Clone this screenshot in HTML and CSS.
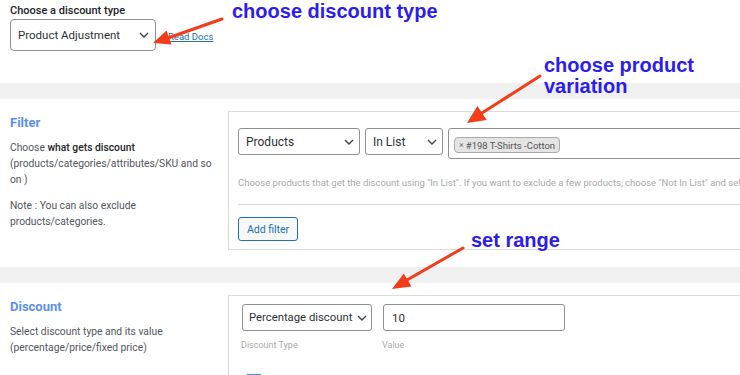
FILE: index.html
```html
<!DOCTYPE html>
<html>
<head>
<meta charset="utf-8">
<link rel="stylesheet" href="styles.css">
</head>
<body>
<div class="page">
  <div class="top">
    <div class="top-label">Choose a discount type</div>
    <div class="top-row">
      <div class="select select-type">
        <span>Product Adjustment</span>
        <svg class="chev" width="10" height="6" viewBox="0 0 10 6"><path d="M1 1l4 4 4-4" fill="none" stroke="#3c434a" stroke-width="1.4"/></svg>
      </div>
      <a class="docs" href="#">Read Docs</a>
    </div>
  </div>

  <div class="band"></div>

  <div class="section section-filter">
    <div class="side">
      <div class="side-title">Filter</div>
      <p class="side-text">Choose <b>what gets discount</b> (products/categories/attributes/SKU and so on )</p>
      <p class="side-text">Note : You can also exclude products/categories.</p>
    </div>
    <div class="box box-filter">
      <div class="filter-row">
        <div class="select select-products">
          <span>Products</span>
          <svg class="chev" width="10" height="6" viewBox="0 0 10 6"><path d="M1 1l4 4 4-4" fill="none" stroke="#3c434a" stroke-width="1.4"/></svg>
        </div>
        <div class="select select-list">
          <span>In List</span>
          <svg class="chev" width="10" height="6" viewBox="0 0 10 6"><path d="M1 1l4 4 4-4" fill="none" stroke="#3c434a" stroke-width="1.4"/></svg>
        </div>
        <div class="multi">
          <span class="tag"><span class="tag-x">×</span>#198 T-Shirts -Cotton</span>
        </div>
      </div>
      <div class="help">Choose products that get the discount using "In List". If you want to exclude a few products, choose "Not In List" and select the products you wanted to exclude.</div>
      <div class="divider"></div>
      <button class="btn">Add filter</button>
    </div>
  </div>

  <div class="band band-2"></div>

  <div class="section section-discount">
    <div class="side">
      <div class="side-title">Discount</div>
      <p class="side-text">Select discount type and its value (percentage/price/fixed price)</p>
    </div>
    <div class="box box-discount">
      <div class="disc-row">
        <div class="field">
          <div class="select select-pct">
            <span>Percentage discount</span>
            <svg class="chev" width="10" height="6" viewBox="0 0 10 6"><path d="M1 1l4 4 4-4" fill="none" stroke="#3c434a" stroke-width="1.4"/></svg>
          </div>
          <div class="field-label">Discount Type</div>
        </div>
        <div class="field">
          <div class="input">10</div>
          <div class="field-label">Value</div>
        </div>
      </div>
      <div class="check"></div>
    </div>
  </div>

  <div class="note note-1">choose discount type</div>
  <div class="note note-2">choose product<br>variation</div>
  <div class="note note-3">set range</div>

  <svg class="arrows" width="740" height="375" viewBox="0 0 740 375">
    <g stroke="#f23c1a" stroke-width="3" fill="#f23c1a" stroke-linecap="round">
      <line x1="222" y1="19" x2="168" y2="38"/>
      <polygon stroke="none" points="153,43 171.5,44.5 166.5,30.5"/>
      <line x1="540" y1="76" x2="482" y2="113"/>
      <polygon stroke="none" points="467,123 486.8,120 477.4,106"/>
      <line x1="463" y1="248" x2="407" y2="280"/>
      <polygon stroke="none" points="392,289 411.5,286.5 403.8,273.5"/>
    </g>
  </svg>
</div>
</body>
</html>
```

FILE: styles.css
```css
html, body {
  margin: 0;
  padding: 0;
  background: #fff;
  overflow: hidden;
}
body {
  width: 740px;
  height: 375px;
  font-family: Roboto, "Liberation Sans", sans-serif;
  color: #3c434a;
}
.page {
  position: relative;
  width: 740px;
  height: 375px;
  overflow: hidden;
}
.top {
  padding: 4px 0 0 10px;
  height: 79px;
}
.top-label {
  font-size: 11px;
  font-weight: 500;
  color: #1d2327;
  line-height: 13px;
}
.top-row {
  display: flex;
  align-items: flex-end;
  margin-top: 2px;
}
.select {
  box-sizing: border-box;
  flex: none;
  display: flex;
  align-items: center;
  justify-content: space-between;
  border: 1px solid #8c8f94;
  border-radius: 3px;
  background: #fff;
  color: #2c3338;
  font-size: 12px;
  white-space: nowrap;
}
.select-type {
  width: 146px;
  height: 32px;
  padding: 0 6px 0 7px;
  border-radius: 4px;
  font-size: 11.5px;
}
.chev {
  flex: none;
}
.docs {
  font-size: 9.5px;
  color: #2271b1;
  text-decoration: underline;
  margin: 0 0 9px 12px;
}
.band {
  height: 16px;
  background: #f0f0f0;
}
.section {
  display: flex;
  margin-top: 12px;
}
.side {
  width: 218px;
  padding-left: 10px;
  box-sizing: border-box;
  flex: none;
}
.side-title {
  font-size: 13px;
  font-weight: 700;
  color: #5a8ff0;
  line-height: 16px;
  margin-top: 4px;
}
.side-text {
  font-size: 10.3px;
  line-height: 16px;
  color: #50575e;
  margin: 9px 0 0;
}
.side-text + .side-text {
  margin-top: 10px;
}
.side-text b {
  font-weight: 500;
  color: #1d2327;
}
.box {
  flex: none;
  width: 600px;
  margin-left: 10px;
  border: 1px solid #dcdcde;
  box-sizing: border-box;
}
.box-filter {
  height: 139px;
  padding: 16px 0 0 9px;
}
.filter-row {
  display: flex;
  align-items: flex-start;
}
.select-products {
  width: 122px;
  height: 27px;
  padding: 0 5px 0 7px;
}
.select-list {
  width: 78px;
  height: 27px;
  margin-left: 5px;
  padding: 0 5px 0 7px;
}
.multi {
  flex: none;
  box-sizing: border-box;
  margin-left: 5px;
  width: 400px;
  height: 31px;
  border: 1px solid #8c8f94;
  border-radius: 3px;
  padding: 4px 5px;
}
.tag {
  display: inline-flex;
  align-items: center;
  height: 16px;
  box-sizing: border-box;
  padding: 0 4px 0 4px;
  background: #e4e4e4;
  border: 1px solid #aaa;
  border-radius: 4px;
  font-size: 9.5px;
  color: #555;
}
.tag-x {
  color: #777;
  margin-right: 2px;
  font-size: 9px;
}
.help {
  white-space: nowrap;
  font-size: 9.5px;
  color: #a7aaad;
  margin-top: 18px;
  line-height: 12px;
}
.divider {
  height: 1px;
  background: #dcdcde;
  margin-top: 15px;
}
.btn {
  display: block;
  margin-top: 12px;
  width: 60px;
  height: 24px;
  border: 1px solid #2271b1;
  border-radius: 3px;
  background: #f6f7f7;
  color: #2271b1;
  font-family: Roboto, "Liberation Sans", sans-serif;
  font-size: 10.5px;
  padding: 0;
}
.band-2 {
  margin-top: 17px;
}
.box-discount {
  height: 100px;
  border-right: none;
  border-bottom: none;
  padding: 8px 0 0 13px;
}
.disc-row {
  display: flex;
  gap: 11px;
}
.select-pct {
  width: 130px;
  height: 27px;
  padding: 0 4px 0 6px;
  font-size: 11.3px;
}
.input {
  box-sizing: border-box;
  width: 182px;
  height: 27px;
  border: 1px solid #8c8f94;
  border-radius: 3px;
  font-size: 11.5px;
  color: #2c3338;
  padding: 6px 0 0 8px;
}
.field-label {
  font-size: 9px;
  color: #a7aaad;
  margin-top: 9px;
  margin-left: -1px;
}
.check {
  margin-top: 24px;
  margin-left: 5px;
  width: 14px;
  height: 14px;
  border-top: 2px solid #4a8ef0;
  box-sizing: border-box;
}
.note {
  position: absolute;
  font-family: "Liberation Sans", Arial, sans-serif;
  font-weight: 700;
  color: #2b1cf0;
  font-size: 20px;
  line-height: 21px;
}
.note-1 {
  left: 232px;
  top: 1px;
}
.note-2 {
  left: 544px;
  top: 55px;
}
.note-3 {
  left: 471px;
  top: 230px;
}
.arrows {
  position: absolute;
  left: 0;
  top: 0;
}
```
